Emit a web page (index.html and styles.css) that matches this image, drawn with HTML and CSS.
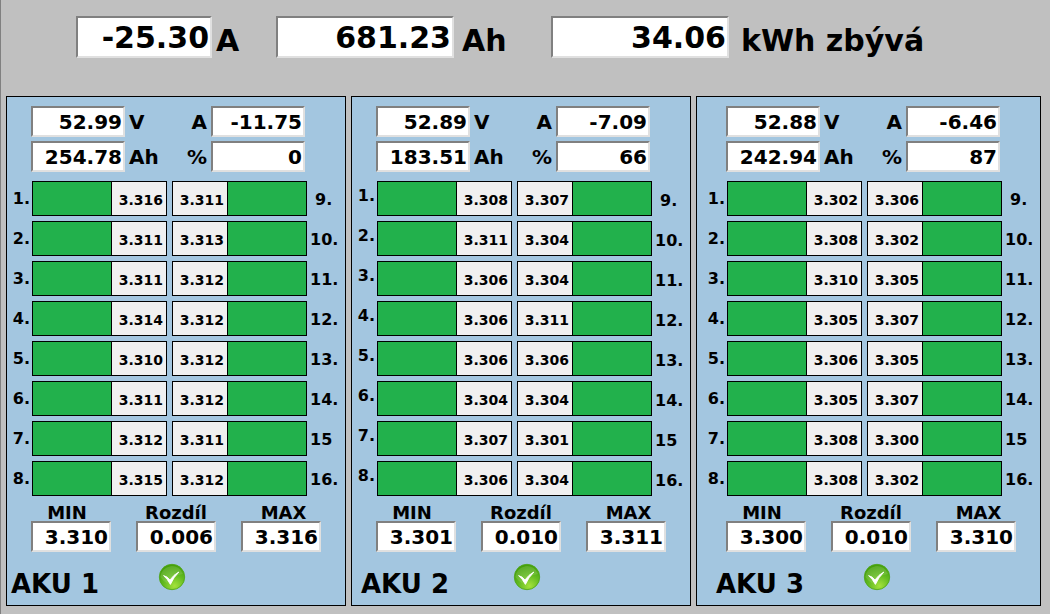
FILE: index.html
```
<!DOCTYPE html>
<html lang="cs">
<head>
<meta charset="utf-8">
<title>AKU</title>
<link rel="stylesheet" href="styles.css">
</head>
<body>
<header class="totals">
  <label class="total total-current"><input class="field" readonly value="-25.30"><span>A</span></label>
  <label class="total total-charge"><input class="field" readonly value="681.23"><span>Ah</span></label>
  <label class="total total-energy"><input class="field" readonly value="34.06"><span>kWh zbývá</span></label>
</header>
<main class="banks" id="banks"></main>
<script src="app.js"></script>
</body>
</html>
```
FILE: styles.css
```
* { box-sizing: border-box; }
body {
  margin: 0;
  min-height: 100vh;
  background: #c0c0c0;
  border-left: 1px solid #808080;
  color: #000;
  font-family: "DejaVu Sans", Verdana, sans-serif;
  font-weight: bold;
}
.field {
  min-width: 0;
  margin: 0;
  padding: 1px 1px 0 0;
  background: #fff;
  border: 2px solid;
  border-color: #808080 #e0e0e0 #e0e0e0 #808080;
  border-radius: 0;
  color: #000;
  font: inherit;
  text-align: right;
}
.totals {
  display: flex;
  height: 96px;
  padding: 16px 0 0 75px;
  font-size: 30px;
  line-height: 49px;
}
.total { display: flex; white-space: nowrap; }
.total .field { width: 178px; height: 42px; margin-right: 8px; }
.total-current { width: 200px; }
.total-current .field { width: 136px; margin-right: 4px; }
.total-charge { width: 275px; }
.total-energy .field { margin-right: 12px; }
.banks {
  display: grid;
  grid-template-columns: 340fr 340fr 345fr;
  gap: 5px;
  padding: 0 9px 8px 5px;
}
.bank {
  padding: 9px 0 1px;
  background: #a3c6e0;
  border: 1px solid #000;
}
.inner { width: 336px; }
.bank-3 .inner { margin-left: 5px; }
.meters {
  display: grid;
  grid-template-columns: 94px 35px 39px 94px;
  gap: 4px;
  padding-left: 24px;
  font-size: 20px;
  line-height: 31px;
}
.meters .field { height: 31px; }
.meters label { height: 31px; line-height: 33px; }
.meters label:nth-of-type(even) { text-align: right; }
.cells {
  display: grid;
  grid-template-columns: 25px 140px 135px 36px;
  grid-auto-rows: 35px;
  row-gap: 5px;
  padding-top: 9px;
  font-size: 16px;
}
.index { padding-right: 2px; text-align: right; line-height: 35px; white-space: nowrap; }
.index-right { padding: 0 0 0 3px; text-align: left; line-height: 37px; }
.index-first { padding-left: 8px; }
.bank-2 .index { line-height: 29px; }
.bank-2 .index-right { line-height: 39px; }
.cell {
  display: grid;
  grid-template-columns: 79px 1fr;
  height: 35px;
  margin-right: 5px;
  border: 1px solid #000;
  background: #f0f0f0;
  font-size: 14px;
  line-height: 30px;
}
.cell-right { grid-template-columns: 1fr 79px; margin-right: 0; }
.bar { background: #22b14c; border-right: 1px solid #000; }
.cell-right .bar { border-right: 0; border-left: 1px solid #000; }
.value { padding: 3px 3px 0 0; text-align: right; }
.summary {
  display: grid;
  grid-template-columns: repeat(3, 80px);
  column-gap: 25px;
  padding: 7px 0 0 24px;
  font-size: 20px;
}
.summary label { display: flex; flex-direction: column; }
.summary span { height: 18px; font-size: 18px; line-height: 20px; text-align: center; }
.summary label:first-child span { padding-right: 8px; }
.summary label:last-child span { padding-left: 5px; }
.summary .field { width: 100%; height: 31px; }
.footer { position: relative; padding: 12px 0 0 4px; }
.footer h2 { margin: 0; font-size: 26px; line-height: 40px; }
.bank-2 .footer { padding-left: 9px; }
.bank-3 .footer { padding-left: 14px; }
.status { position: absolute; left: 151px; top: 11px; width: 28px; height: 28px; }
.bank-2 .status, .bank-3 .status { left: 161px; }
```
FILE: app.js
```
const banks = [
  { v: '52.99', a: '-11.75', ah: '254.78', pct: '0', min: '3.310', diff: '0.006', max: '3.316',
    left: ['3.316', '3.311', '3.311', '3.314', '3.310', '3.311', '3.312', '3.315'],
    right: ['3.311', '3.313', '3.312', '3.312', '3.312', '3.312', '3.311', '3.312'] },
  { v: '52.89', a: '-7.09', ah: '183.51', pct: '66', min: '3.301', diff: '0.010', max: '3.311',
    left: ['3.308', '3.311', '3.306', '3.306', '3.306', '3.304', '3.307', '3.306'],
    right: ['3.307', '3.304', '3.304', '3.311', '3.306', '3.304', '3.301', '3.304'] },
  { v: '52.88', a: '-6.46', ah: '242.94', pct: '87', min: '3.300', diff: '0.010', max: '3.310',
    left: ['3.302', '3.308', '3.310', '3.305', '3.306', '3.305', '3.308', '3.308'],
    right: ['3.306', '3.302', '3.305', '3.307', '3.305', '3.307', '3.300', '3.302'] }
];

const field = (id, value) => `<input class="field" id="${id}" readonly value="${value}">`;

const row = (bank, i) => `
  <span class="index">${i + 1}.</span>
  <div class="cell"><span class="bar"></span><span class="value">${bank.left[i]}</span></div>
  <div class="cell cell-right"><span class="value">${bank.right[i]}</span><span class="bar"></span></div>
  <span class="index index-right${i === 0 ? ' index-first' : ''}">${i + 9}${i === 6 ? '' : '.'}</span>`;

const check = n => `
  <svg class="status" viewBox="0 0 28 28" role="img" aria-label="OK">
    <defs>
      <radialGradient id="green${n}" cx=".6" cy=".85" r=".8">
        <stop offset="0" stop-color="#a4e23c"/><stop offset=".55" stop-color="#62ba20"/><stop offset="1" stop-color="#46a00c"/>
      </radialGradient>
    </defs>
    <circle cx="14" cy="14" r="12.7" fill="url(#green${n})" stroke="#4ba414" stroke-width=".8"/>
    <path d="M2.4 14A11.6 11.6 0 0 1 25 11Q15 12 9 20Q5 18 2.4 14Z" fill="#fff" opacity=".12"/>
    <path d="M5.6 12.6Q9.5 13.6 12 17Q15.5 11.8 20.8 9Q15.4 14.4 12.4 21.4Q9.6 16 5.6 12.6Z" fill="#fff" stroke="#fff" stroke-width=".9"/>
  </svg>`;

document.getElementById('banks').innerHTML = banks.map((bank, b) => {
  const n = b + 1;
  return `
  <section class="bank bank-${n}">
    <div class="inner">
      <div class="meters">
        ${field('v' + n, bank.v)}<label for="v${n}">V</label><label for="a${n}">A</label>${field('a' + n, bank.a)}
        ${field('ah' + n, bank.ah)}<label for="ah${n}">Ah</label><label for="p${n}">%</label>${field('p' + n, bank.pct)}
      </div>
      <div class="cells">${bank.left.map((_, i) => row(bank, i)).join('')}</div>
      <div class="summary">
        <label><span>MIN</span>${field('min' + n, bank.min)}</label>
        <label><span>Rozdíl</span>${field('diff' + n, bank.diff)}</label>
        <label><span>MAX</span>${field('max' + n, bank.max)}</label>
      </div>
      <div class="footer"><h2>AKU ${n}</h2>${check(n)}</div>
    </div>
  </section>`;
}).join('');
```
